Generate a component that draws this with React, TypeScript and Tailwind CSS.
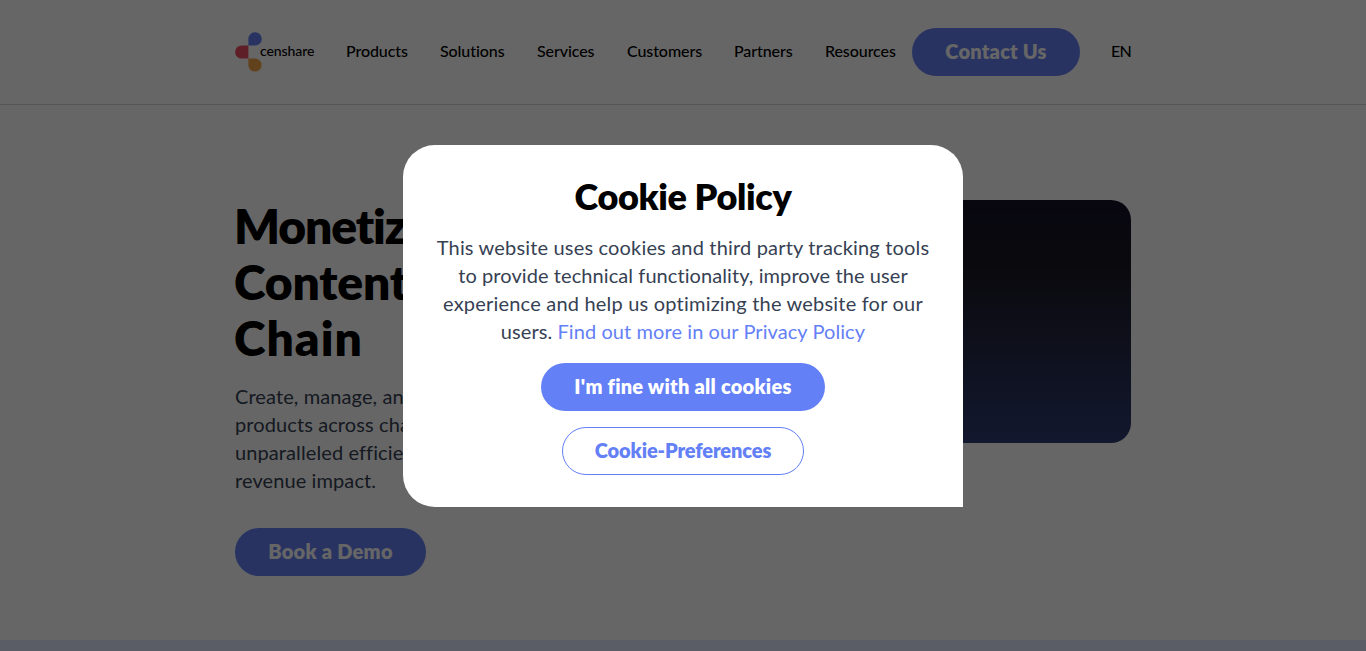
const navItems = [
  { label: "Products", className: "w-[62px]" },
  { label: "Solutions", className: "w-[65px]" },
  { label: "Services", className: "w-[58px]" },
  { label: "Customers", className: "w-[75px]" },
  { label: "Partners", className: "w-[59px]" },
  { label: "Resources", className: "w-[71px]" },
];

function Logo() {
  return (
    <a href="#" aria-label="censhare" className="flex h-10 w-[79px] shrink-0 items-center">
      <svg width="27" height="40" viewBox="0 0 27 40" className="shrink-0">
        <path d="M13.4 13.6V7.3A6.7 6.7 0 1 1 20.1 13.6Z" fill="#6480f6" />
        <path d="M13.4 13.4V26.6H6.7a6.6 6.6 0 0 1 0-13.2Z" fill="#eb5160" />
        <path d="M13.4 26.4h6.7a6.6 6.6 0 1 1-6.7 6.6Z" fill="#f2a54a" />
      </svg>
      <span className="-ml-[2px] -mt-[3px] whitespace-nowrap text-[14px] font-medium leading-5 tracking-[-0.1px] text-black">
        censhare
      </span>
    </a>
  );
}

function Header() {
  return (
    <header className="h-[105px] border-b border-gray-300">
      <div className="mx-auto flex h-[104px] w-[896px] items-center">
        <Logo />
        <nav className="-mt-[2px] ml-8 flex gap-8 text-[16px] font-medium leading-6 tracking-[-0.08px] text-black">
          {navItems.map((item) => (
            <a key={item.label} href="#" className={`whitespace-nowrap ${item.className}`}>
              {item.label}
            </a>
          ))}
        </nav>
        <a
          href="#"
          className="ml-4 flex h-12 w-[168px] shrink-0 items-center justify-center rounded-3xl bg-[#6480f6] pb-[2px] text-[20px] font-extrabold tracking-[0.2px] text-white"
        >
          Contact Us
        </a>
        <span className="-mt-[2px] ml-[31px] whitespace-nowrap text-[16px] font-medium tracking-[-0.8px] text-black">
          EN
        </span>
      </div>
    </header>
  );
}

function Hero() {
  return (
    <section className="mx-auto flex h-[535px] w-[896px] justify-between pt-[93px]">
      <div className="w-[432px]">
        <h1 className="-ml-px whitespace-nowrap text-[48px] font-extrabold leading-[56px] text-black">
          <span className="tracking-[-1.1px]">Monetize Your</span>
          <br />
          <span className="tracking-[-0.2px]">Content Supply</span>
          <br />
          <span className="tracking-[1px]">Chain</span>
        </h1>
        <p className="mt-4 whitespace-nowrap text-[20px] leading-7 tracking-[0.1px] text-gray-700">
          Create, manage, and deliver
          <br />
          products across channels with
          <br />
          unparalleled efficiency and
          <br />
          revenue impact.
        </p>
        <a
          href="#"
          className="mt-[34px] flex h-12 w-[191px] items-center justify-center rounded-3xl bg-[#6480f6] pb-[2px] text-[20px] font-extrabold tracking-[0.25px] text-white"
        >
          Book a Demo
        </a>
      </div>
      <div className="mt-[2px] h-[243px] w-[432px] rounded-[20px] bg-linear-to-b from-[#15122a] via-[#1a1822] via-25% to-[#2e3c74]" />
    </section>
  );
}

function CookieDialog() {
  return (
    <div className="fixed inset-0 flex items-start justify-center bg-black/60 pt-[145px]">
      <div
        role="dialog"
        aria-label="Cookie Policy"
        className="flex h-[362px] w-[560px] flex-col items-center rounded-[32px] rounded-br-none bg-white pt-[31px]"
      >
        <h2 className="whitespace-nowrap text-[36px] font-extrabold leading-[41px] tracking-[-0.35px] text-black">
          Cookie Policy
        </h2>
        <p className="mt-4 whitespace-nowrap text-center text-[20px] leading-7 text-gray-700">
          <span className="tracking-[0.17px]">This website uses cookies and third party tracking tools</span>
          <br />
          <span className="tracking-[0.08px]">to provide technical functionality, improve the user</span>
          <br />
          <span className="tracking-[0.2px]">experience and help us optimizing the website for our</span>
          <br />
          <span className="tracking-[0.08px]">
            users.{" "}
            <a href="#" className="text-[#6480f6]">
              Find out more in our Privacy Policy
            </a>
          </span>
        </p>
        <button className="mt-[18px] h-12 w-[284px] rounded-3xl bg-[#6480f6] pb-[2px] text-[20px] font-extrabold tracking-[0.25px] text-white">
          I'm fine with all cookies
        </button>
        <button className="mt-4 h-12 w-[242px] rounded-3xl border border-[#6480f6] pb-[2px] text-[20px] font-extrabold tracking-[-0.1px] text-[#6480f6]">
          Cookie-Preferences
        </button>
      </div>
    </div>
  );
}

export default function App() {
  return (
    <div className="h-[651px] overflow-hidden bg-white font-['Lato',sans-serif] [font-variant-ligatures:none]">
      <Header />
      <Hero />
      <div className="h-[11px] bg-indigo-100" />
      <CookieDialog />
    </div>
  );
}
